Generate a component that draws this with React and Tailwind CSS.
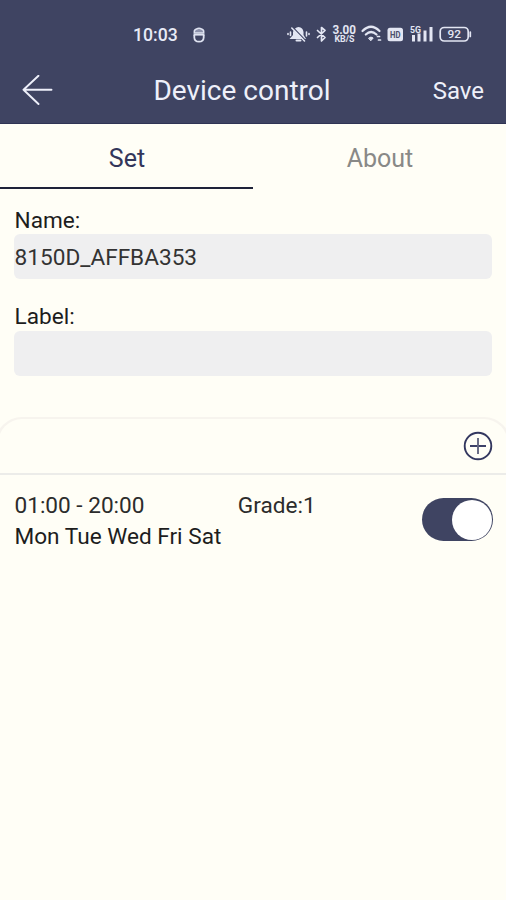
function StatusIcons() {
  return (
    <svg className="h-10 w-[192px]" viewBox="284 15 192 40" fill="none" stroke="#e3e6f3" strokeWidth="1.6" strokeLinecap="round">
      {/* muted bell */}
      <path d="M289.500 39 L293 35 V32 Q294.500 27.500 298.500 27 Q303 27.500 303.500 32 V35 L306 39 Z" fill="#e3e6f3" stroke="none" />
      <path d="M296.500 40.500 h4" strokeWidth="2" />
      <path d="M293 27.500 L306 41" stroke="#3f4462" strokeWidth="1.200" />
      <path d="M291.800 28 L304.500 41" strokeWidth="1.600" />
      <path d="M290.500 32 v3.500 M288 33.500 v1 M306.500 32 v4 M309 33.500 v1" strokeWidth="1.600" />
      {/* bluetooth */}
      <path d="M317.500 30.500 L325 37.500 L321.500 41 V27.500 L325 30.500 L317.500 37.500" strokeWidth="1.700" strokeLinejoin="round" />
      {/* wifi */}
      <path d="M362.500 31 Q371 22.500 379.500 31" strokeWidth="2.200" />
      <path d="M365.800 34.500 Q371 29.500 376.500 34.500" strokeWidth="2.200" />
      <path d="M368.800 38 Q371 36 373.200 38 L371 40.500 Z" fill="#e3e6f3" strokeWidth="1" />
      <path d="M377.500 36.500 h2 M378.500 40 h2" strokeWidth="1.700" />
      {/* HD badge */}
      <rect x="387.500" y="27.800" width="15.500" height="13.500" rx="2.500" fill="#e3e6f3" stroke="none" />
      {/* signal */}
      <path d="M413.500 35 v6.500 M419 33.500 v8 M425 30.500 v11 M431 27 v14.500" strokeWidth="3" strokeLinecap="butt" />
      {/* battery */}
      <rect x="440.200" y="27.500" width="28" height="13.500" rx="4" strokeWidth="1.700" />
      <path d="M470.300 32 v4.500" strokeWidth="1.700" />
      <g fill="#e3e6f3" stroke="none" fontFamily="Roboto, sans-serif" fontWeight="700">
        <text x="332.500" y="34" fontSize="12" textLength="23.500" lengthAdjust="spacingAndGlyphs">3.00</text>
        <text x="334.500" y="42.300" fontSize="9.500" textLength="20" lengthAdjust="spacingAndGlyphs">KB/S</text>
        <text x="390" y="37.800" fontSize="9" fill="#4b506c" textLength="10.500" lengthAdjust="spacingAndGlyphs">HD</text>
        <text x="410" y="33" fontSize="9.500" textLength="11" lengthAdjust="spacingAndGlyphs">5G</text>
        <text x="447.500" y="38.300" fontSize="11.500" fontWeight="500" textLength="13.500" lengthAdjust="spacingAndGlyphs">92</text>
      </g>
    </svg>
  );
}

function Field({ label, value, className, labelClassName }) {
  return (
    <label className={`block ${className}`}>
      <span className={`block h-[30px] pl-[0.6px] text-[22.6px] leading-[30px] text-[#1d1d1d] ${labelClassName}`}>{label}</span>
      <input
        readOnly
        defaultValue={value}
        className="block h-[45px] w-full rounded-[6px] bg-[#efeff0] pt-[2px] pr-0 pb-0 pl-[0.6px] text-[22.6px] text-[#333333] outline-none"
      />
    </label>
  );
}

export default function App() {
  return (
    <div className="flex h-[900px] w-[506px] flex-col overflow-hidden bg-[#fffef6] font-[Roboto,sans-serif] text-[#1d1d1d]">
      <header className="h-[124px] shrink-0 border-b border-[#2f3454] bg-[#3f4462] text-[#eef0fa]">
        <div className="flex h-[69px] items-center pr-[30px] pl-[133px]">
          <span className="pt-px text-[17.6px] font-medium text-[#e8ebf7]">10:03</span>
          <svg className="ml-[14px] h-[18px] w-[14px]" viewBox="0 0 14 18" fill="none" stroke="#dfe3f1" strokeWidth="1.500">
            <path d="M2.300 7 V5.500 Q2.300 3.500 4.500 3 Q7 1.500 9.500 3 Q11.700 3.500 11.700 5.500 V7 Z" fill="#8b90aa" />
            <path d="M2.300 9 V11.500 Q2.500 15.700 7 15.700 Q11.500 15.700 11.700 11.500 V9" strokeWidth="1.800" />
            <path d="M1.500 8.700 h11" strokeWidth="1.800" />
          </svg>
          <div className="ml-auto"><StatusIcons /></div>
        </div>
        <div className="grid h-11 grid-cols-[119px_1fr_141px] items-center">
          <svg className="ml-[22px] h-8 w-8" viewBox="0 0 32 32" fill="none" stroke="#eef0fa" strokeWidth="1.900" strokeLinecap="round" strokeLinejoin="round">
            <path d="M16.500 0.800 L1.500 14.800 L16.500 29 M1.500 14.800 H29.500" />
          </svg>
          <h1 className="text-center text-[28px] leading-none whitespace-nowrap">Device control</h1>
          <button className="pr-[22px] text-right text-[24px] leading-none">Save</button>
        </div>
      </header>

      <nav className="grid h-[65px] shrink-0 grid-cols-2 text-[25px]">
        <button className="border-b-2 border-[#1e2239] pt-[6px] pl-px text-[#33365a]">Set</button>
        <button className="border-b-2 border-transparent pt-[6px] pl-px text-[#898987]">About</button>
      </nav>

      <section className="h-[228px] shrink-0 px-[14px] pt-[15px]">
        <Field label="Name:" value="8150D_AFFBA353" labelClassName="pt-[2px]" />
        <Field label="Label:" value="" className="mt-[22px]" labelClassName="pt-px" />
      </section>

      <section className="flex-1">
        <div className="-mx-[5px] flex h-[56px] items-center justify-end rounded-t-[27px] border-x-[3px] border-t-2 border-[#f7f4ee] pr-[15px]">
          <button aria-label="Add">
            <svg className="h-[30px] w-[30px]" viewBox="0 0 30 30" fill="none" stroke="#33375f" strokeWidth="1.900">
              <circle cx="15" cy="15" r="13.300" />
              <path d="M7 15 h16" />
              <path d="M15 7 v16" stroke="#646780" />
            </svg>
          </button>
        </div>
        <div className="flex items-start border-t-2 border-[#ecece9] pt-4 pr-[13px] pl-[14.5px] text-[22.6px] leading-[30px]">
          <div className="w-[223.3px] whitespace-nowrap">
            <p className="text-[#2c2c2c]">01:00 - 20:00</p>
            <p className="pt-px">Mon Tue Wed Fri Sat</p>
          </div>
          <p className="text-[#2c2c2c]">Grade:1</p>
          <button role="switch" aria-checked="true" className="mt-[7px] ml-auto flex h-[43px] w-[71px] justify-end rounded-full bg-[#3f4462] p-[1.5px]">
            <span className="h-10 w-10 rounded-full bg-white" />
          </button>
        </div>
      </section>
    </div>
  );
}
